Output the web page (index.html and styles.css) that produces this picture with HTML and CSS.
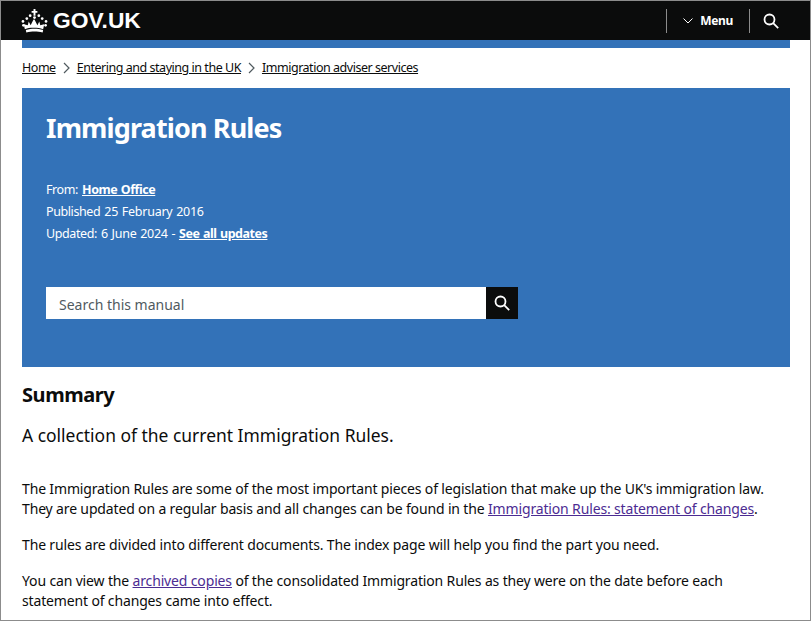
FILE: index.html
```html
<!DOCTYPE html>
<html lang="en">
<head>
  <meta charset="UTF-8">
  <title>Immigration Rules - GOV.UK</title>
  <link rel="stylesheet" href="styles.css">
</head>
<body>

<div class="frame">
  <header class="topbar">
    <a class="logo" href="#">
      <svg class="crown" viewBox="0 0 28 26" width="27" height="25" fill="#fff">
        <path d="M13 1h2v2h2v2h-2v3h-2V5h-2V3h2z"/>
        <circle cx="14" cy="10" r="1.5"/>
        <circle cx="9.5" cy="8" r="1.4"/><circle cx="18.5" cy="8" r="1.4"/>
        <circle cx="6" cy="11" r="1.4"/><circle cx="22" cy="11" r="1.4"/>
        <circle cx="2" cy="14" r="1.4"/><circle cx="26" cy="14" r="1.4"/>
        <circle cx="2.5" cy="18" r="1.4"/><circle cx="25.5" cy="18" r="1.4"/>
        <path d="M4 22c-.5-2-1-4-1-5l4 1 1-4 2 4 3-6 1 0 3 6 2-4 1 4 4-1c0 1-.5 3-1 5-3-1-6-1.500-10-1.500S7 21 4 22z"/>
        <path d="M5 23c3-1 6-1.300 9-1.300s6 .3 9 1.300l-.5 2.500c-3-.8-5.500-1-8.500-1s-5.500.2-8.500 1z"/>
      </svg>
      <span>GOV.UK</span>
    </a>
    <div class="nav">
      <div class="menu">
        <svg class="chev" viewBox="0 0 10 6" width="10" height="6" fill="none" stroke="#fff" stroke-width="1">
          <path d="M.5.5 5 5 9.500.5"/>
        </svg>
        <span>Menu</span>
      </div>
      <div class="nav-search">
        <svg viewBox="0 0 16 16" width="16" height="16" fill="none" stroke="#fff" stroke-width="1.800">
          <circle cx="6.500" cy="6.500" r="5"/><path d="m10.200 10.200 5 5"/>
        </svg>
      </div>
    </div>
  </header>

  <div class="wrap">
    <div class="blue-strip"></div>

    <nav class="crumbs">
      <a href="#">Home</a>
      <svg class="sep" viewBox="0 0 7 12" width="7" height="12" fill="none" stroke="#505a5f" stroke-width="1.200"><path d="m1 1 5 5-5 5"/></svg>
      <a href="#">Entering and staying in the UK</a>
      <svg class="sep" viewBox="0 0 7 12" width="7" height="12" fill="none" stroke="#505a5f" stroke-width="1.200"><path d="m1 1 5 5-5 5"/></svg>
      <a href="#">Immigration adviser services</a>
    </nav>

    <section class="hero">
      <h1>Immigration Rules</h1>
      <dl class="meta">
        <div><dt>From:</dt><dd><a href="#"><b>Home Office</b></a></dd></div>
        <div><dt>Published</dt><dd>25 February 2016</dd></div>
        <div><dt>Updated:</dt><dd>6 June 2024 - <a href="#"><b>See all updates</b></a></dd></div>
      </dl>
      <form class="search">
        <input type="text" placeholder="Search this manual">
        <button type="button">
          <svg viewBox="0 0 16 16" width="16" height="16" fill="none" stroke="#fff" stroke-width="1.800">
            <circle cx="6.500" cy="6.500" r="5"/><path d="m10.200 10.200 5 5"/>
          </svg>
        </button>
      </form>
    </section>

    <h2>Summary</h2>
    <p class="lead">A collection of the current Immigration Rules.</p>

    <div class="body-text">
      <p>The Immigration Rules are some of the most important pieces of legislation that make up the UK's immigration law. They are updated on a regular basis and all changes can be found in the <a class="visited" href="#">Immigration Rules: statement of changes</a>.</p>
      <p>The rules are divided into different documents. The index page will help you find the part you need.</p>
      <p>You can view the <a class="visited" href="#">archived copies</a> of the consolidated Immigration Rules as they were on the date before each statement of changes came into effect.</p>
    </div>
  </div>
</div>

</body>
</html>
```

FILE: styles.css
```css
html, body {
  margin: 0;
  padding: 0;
  height: 100%;
  overflow: hidden;
}

body {
  font-family: "Noto Sans", Arial, sans-serif;
  color: #0b0c0c;
  background: #fff;
}

.frame {
  box-sizing: border-box;
  height: 621px;
  border: 1px solid #8c8c8c;
  overflow: hidden;
}

/* header */
.topbar {
  display: flex;
  justify-content: space-between;
  align-items: center;
  height: 39px;
  background: #0b0c0c;
  padding-left: 20px;
  padding-right: 31px;
}

.logo {
  display: flex;
  align-items: center;
  gap: 5px;
  color: #fff;
  text-decoration: none;
  font-family: "Liberation Sans", Arial, sans-serif;
  font-weight: bold;
  font-size: 22.800px;
}

.nav {
  display: flex;
  align-items: center;
}

.menu {
  display: flex;
  align-items: center;
  gap: 7px;
  height: 24px;
  padding: 0 16px;
  border-left: 1px solid #8c8c8c;
  border-right: 1px solid #8c8c8c;
  color: #fff;
  font-size: 12px;
  letter-spacing: -0.350px;
  font-weight: bold;
}

.nav-search {
  display: flex;
  padding-left: 13px;
}

/* page */
.wrap {
  padding: 0 20px 0 21px;
}

.blue-strip {
  height: 8px;
  background: #3372b8;
}

.crumbs {
  display: flex;
  align-items: center;
  gap: 7px;
  height: 39px;
  padding-bottom: 1px;
  font-size: 12.500px;
  letter-spacing: -0.470px;
}

.crumbs a {
  color: #0b0c0c;
}

.hero {
  box-sizing: border-box;
  height: 279px;
  background: #3372b8;
  color: #fff;
  padding: 24px;
}

.hero h1 {
  margin: 0 0 35px;
  font-size: 27px;
  letter-spacing: -0.870px;
  line-height: 32px;
  font-weight: bold;
}

.meta {
  margin: 0 0 42px;
  font-size: 12.500px;
  letter-spacing: -0.250px;
  word-spacing: 0.700px;
  line-height: 22px;
}

.meta b {
  letter-spacing: -0.450px;
}

.meta div {
  display: flex;
  gap: 4px;
}

.meta dt, .meta dd {
  margin: 0;
}

.meta dt {
  letter-spacing: -0.400px;
}

.meta a {
  color: #fff;
}

.search {
  display: flex;
  width: 472px;
  height: 32px;
}

.search input {
  flex: 1;
  min-width: 0;
  border: 0;
  padding: 2px 13px 0;
  font-family: inherit;
  font-size: 14px;
  background: #fff;
}

.search input::placeholder {
  color: #505a5f;
  opacity: 1;
}

.search button {
  display: flex;
  align-items: center;
  justify-content: center;
  width: 32px;
  padding: 0;
  border: 0;
  background: #0b0c0c;
}

h2 {
  margin: 14px 0 0;
  font-size: 20px;
  letter-spacing: -0.430px;
  line-height: 28px;
  font-weight: bold;
}

.lead {
  margin: 13px 0 0;
  font-size: 17.450px;
  line-height: 26px;
}

.body-text {
  margin-top: 31px;
  font-size: 14px;
  letter-spacing: -0.150px;
  line-height: 20px;
}

.body-text p {
  margin: 0 0 16px;
}

.visited {
  color: #4c2c92;
}
```
